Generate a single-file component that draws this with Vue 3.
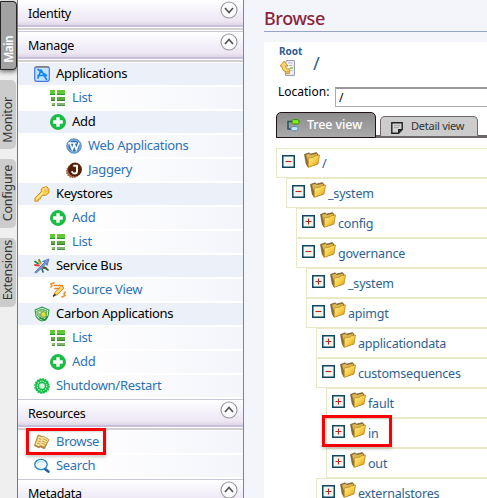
<script setup>
import { h } from 'vue'

const tabs = [
  { label: 'Main', cls: 'main' },
  { label: 'Monitor', cls: 'monitor' },
  { label: 'Configure', cls: 'configure' },
  { label: 'Extensions', cls: 'extensions' }
]

const sections = [
  { title: 'Identity', open: false, items: [] },
  {
    title: 'Manage',
    open: true,
    items: [
      { t: 'Applications', i: 'app', head: true, l: 0 },
      { t: 'List', i: 'list', l: 1 },
      { t: 'Add', i: 'add', head: true, l: 1 },
      { t: 'Web Applications', i: 'web', l: 2 },
      { t: 'Jaggery', i: 'jag', l: 2 },
      { t: 'Keystores', i: 'key', head: true, l: 0 },
      { t: 'Add', i: 'add', l: 1 },
      { t: 'List', i: 'list', l: 1 },
      { t: 'Service Bus', i: 'bus', head: true, l: 0 },
      { t: 'Source View', i: 'source', l: 1 },
      { t: 'Carbon Applications', i: 'carbon', head: true, l: 0 },
      { t: 'List', i: 'list', l: 1 },
      { t: 'Add', i: 'add', l: 1 },
      { t: 'Shutdown/Restart', i: 'gear', l: 0 }
    ]
  },
  {
    title: 'Resources',
    open: true,
    items: [
      { t: 'Browse', i: 'browse', l: 0, mark: true },
      { t: 'Search', i: 'search', l: 0 }
    ]
  },
  { title: 'Metadata', open: true, items: [] }
]

const tree = [
  { t: '/', l: 0, open: true },
  { t: '_system', l: 1, open: true },
  { t: 'config', l: 2 },
  { t: 'governance', l: 2, open: true },
  { t: '_system', l: 3 },
  { t: 'apimgt', l: 3, open: true },
  { t: 'applicationdata', l: 4 },
  { t: 'customsequences', l: 4, open: true },
  { t: 'fault', l: 5 },
  { t: 'in', l: 5, mark: true },
  { t: 'out', l: 5 },
  { t: 'externalstores', l: 4 }
]

const p = (d, fill, stroke, w = 1) =>
  h('path', { d, fill: fill || 'none', stroke: stroke || 'none', 'stroke-width': w, 'stroke-linejoin': 'round', 'stroke-linecap': 'round' })
const c = (cx, cy, r, fill, stroke, w = 1, dash) =>
  h('circle', { cx, cy, r, fill, stroke: stroke || 'none', 'stroke-width': w, 'stroke-dasharray': dash })

const shapes = {
  app: () => [
    p('M3 .7H13Q15.3 .7 15.3 3V13Q15.3 15.3 13 15.3H3Q.7 15.3 .7 13V3Q.7 .7 3 .7Z', '#c5e2fc', '#4478e0', 1.2),
    p('M2 1H14', null, '#8b7f83', 1.4),
    p('M4 12L7 4L12.5 13.5M4 3.5L12.5 9.5M4 9.5L9 9.5', null, '#1687f2', 1.7)
  ],
  list: () => [
    p('M0 0H5V5H0ZM7 0H15V5H7Z', '#62c735'),
    p('M0 4H5V5H0ZM7 4H15V5H7Z', '#259a22'),
    p('M1 7H5V11H1ZM7 7H15V11H7Z', '#5fa93f'),
    p('M1 10H5V11H1ZM7 10H15V11H7Z', '#2c8527'),
    p('M2 13H5V16H2ZM7 13H15V16H7Z', '#86b573'),
    p('M2 15H5V16H2ZM7 15H15V16H7Z', '#4f9540')
  ],
  add: () => [
    c(8, 8, 7.6, '#16bf42', '#06a634', 0.6),
    p('M6.3 3.2H9.7V6.3H12.8V9.7H9.7V12.8H6.3V9.7H3.2V6.3H6.3Z', '#fff')
  ],
  web: () => [
    c(8, 8, 7.3, '#2d6fb4', '#6b9bc8', 1),
    c(8, 8, 6.1, 'none', '#d6eafa', 0.7),
    p('M2.8 5H6M7 5H10M3.8 5L6.3 12L8.2 6L10.3 12L12.8 5.2', null, '#fff', 1.6)
  ],
  jag: () => [
    c(7, 9.2, 6.3, '#a3674a', '#a3674a', 1.5, '1.2 1.2'),
    c(9, 7.6, 7, '#542008'),
    p('M8 3.8H11V9.2Q11 11.5 8.5 11.5Q6.7 11.5 6.2 10', null, '#fff', 1.9)
  ],
  key: () => [
    p('M9 1.7L12.5.6L15.2 3.3L14.7 7.1L11.3 9.6L8.8 9.2L7.2 10.8L6.4 12.9L4.5 13.1L4 15.2L.8 15.2L1 12L7.2 5.8L7.2 3.5Z', '#f9cf4e', '#d18b22', 1),
    p('M2.5 13L8.5 7M9 4L12 2', null, '#fff095', 1.2),
    c(12.2, 3.9, 1.1, '#fff', '#bf8f34', 0.6)
  ],
  bus: () => [
    p('M1 14L11 4L8.5 3.5L15 1L13 7.5L12.3 5.3L3 14.5Z', '#7c9add', '#4469af', 0.8),
    p('M1 3.5L4 5.5M5 2L6.5 5', null, '#248b4a', 1.8),
    p('M1 7L5 7.5M9 10L12 10', null, '#e53a31', 1.8),
    p('M8 11L9 14M10 9L14 12', null, '#20704b', 1.6),
    p('M4.5 3L7 6', null, '#f3a227', 1.4)
  ],
  source: () => [
    p('M4 1L1 1.8L2 4L.8 5M12 15L15 13.5L14 11.5L15.2 10', null, '#f48c25', 1.6),
    p('M4.5 3.5H12.5M5 6.5H10', null, '#e9831b', 1.6),
    p('M12 4L14 6L7 13L3.5 14L4.7 10.8Z', '#fed56d', '#d78828', 1),
    p('M3.5 14L5 12.7', null, '#443327', 1.6)
  ],
  carbon: () => [
    p('M1 4L8 1L15 4L14 10Q12 14 8 15Q4 14 2 10Z', '#e2f5e2', '#2c9b49', 1.1),
    p('M3 5L8 3L13 5L12 10L8 13L4 10Z', '#8fca84', '#5caf5d', 1),
    p('M5 6L8 8L11 6M8 8V12', null, '#fff', 1),
    c(9.5, 8.5, 2.8, '#d7df4e', '#71a52b', 1),
    p('M6 12L11 14L13 11', null, '#218c36', 1.8)
  ],
  gear: () => [
    c(8, 8, 6.9, '#11bd46', '#11bd46', 1.8, '1.8 .9'),
    c(8, 8, 4.8, 'none', '#bef3cb', 1.3, '1.3 1.2'),
    c(8, 8, 2.8, '#d9f7df')
  ],
  browse: () => [
    p('M4.5 1L14.8 5.5L10.5 14.8L6.5 13L4.6 13.8L.8 11.8Z', '#b98337', '#a57531', 0.8),
    p('M1.2 10.5L4.6 1.4L8 3L10 2.4L14.8 5.8L10.3 13L6.8 11.6L4.8 12.4Z', '#f9e39c', '#c79342', 0.8),
    p('M5 4.5L7.2 5.3M4.2 7L6.6 7.8M3.5 9.2L5.7 10M9.5 5L12.6 6.5M8.5 7.2L11.6 8.5M7.8 9.2L10.5 10.4', null, '#c1933c', 0.9)
  ],
  search: () => [
    p('M10.5 10.5L14.3 13.6', null, '#205ba3', 2.6),
    h('ellipse', { cx: 7, cy: 6.5, rx: 6.2, ry: 5.1, fill: '#eef8ff', stroke: '#3286ce', 'stroke-width': 1.4 }),
    p('M3 5.5Q5 2.5 9 4', null, '#c2e1f7', 1.3)
  ]
}
const Glyph = (props) => h('svg', { viewBox: '0 0 16 16', width: 16, height: 16 }, shapes[props.name]())
Glyph.props = ['name']
</script>

<template>
  <div class="page">
    <nav class="rail">
      <div v-for="t in tabs" :key="t.label" class="vtab" :class="t.cls"><span>{{ t.label }}</span></div>
    </nav>
    <aside class="menu">
      <section v-for="s in sections" :key="s.title">
        <header class="sec">
          <span>{{ s.title }}</span>
          <svg class="chev" width="18" height="18" viewBox="0 0 18 18">
            <circle cx="9" cy="9" r="8" fill="#fbfafd" stroke="#999" stroke-width="1.1" />
            <path :d="s.open ? 'M5 11L9 6.5L13 11' : 'M5 7L9 11.5L13 7'" fill="none" stroke="#555" stroke-width="1.7" />
          </svg>
        </header>
        <div v-for="(it, n) in s.items" :key="n" class="item" :class="['l' + it.l, { head: it.head }]">
          <Glyph :name="it.i" /><span>{{ it.t }}</span>
          <i v-if="it.mark" class="mark browse-mark"></i>
        </div>
      </section>
    </aside>
    <main>
      <h1>Browse</h1>
      <div class="panel">
        <div class="crumb">
          <div class="root">
            <b>Root</b>
            <svg width="16" height="16" viewBox="0 0 16 16">
              <path d="M7.5.6H15.4V15.4H6.5V3Z" fill="#f1f3f8" stroke="#9293a9" />
              <path d="M9 3H13.5M10 5.5H13.5M11 8H13.5M12 10.5H13.5" stroke="#b4b9cc" />
              <path d="M11 7H14V9H11Z" fill="#9dcb84" />
              <path d="M1 6L5.2 1.2L9 6H6.7Q6.2 9 10.8 9V11.8Q3 13 2.8 6Z" fill="#f8d66a" stroke="#c38a2b" stroke-width=".9" />
              <path d="M6 12.5Q8 14.2 11 12.8" fill="none" stroke="#d29b37" stroke-width="1.5" />
            </svg>
          </div>
          <span class="slash">/</span>
        </div>
        <div class="loc"><label>Location:</label><div class="field">/</div></div>
        <div class="views">
          <div class="view on">
            <svg width="13" height="13" viewBox="0 0 13 13">
              <path d="M5 2.5H1V10H5" fill="none" stroke="#24535b" stroke-width="1.5" />
              <rect x="5" y=".6" width="7" height="4.4" rx="1.4" fill="#83ed1d" stroke="#398217" />
              <rect x="4" y="7.6" width="7" height="4.2" rx="1.8" fill="#c5e5ff" stroke="#568eb4" />
            </svg>
            <span>Tree view</span>
          </div>
          <div class="view off">
            <svg width="12" height="12" viewBox="0 0 12 12">
              <path d="M.8.8H11.2V7.5L7.5 11.2H.8Z" fill="#d2d2d2" stroke="#222" stroke-width="1.4" />
              <path d="M7 11.5V7H11.5Z" fill="#222" />
              <path d="M3 3.5H9M3 5.5H8" stroke="#a9a9a9" />
            </svg>
            <span>Detail view</span>
          </div>
        </div>
        <div class="tree">
          <div v-for="(n, k) in tree" :key="k" class="node" :class="'d' + n.l">
            <svg class="toggle" width="13" height="13" viewBox="0 0 13 13">
              <rect x=".75" y=".75" width="11.5" height="11.5" fill="#f2f6ed" stroke="#104760" stroke-width="1.5" />
              <path :d="n.open ? 'M3.5 6.5H9.5' : 'M3.5 6.5H9.5M6.5 3.5V9.5'" stroke="#b92722" stroke-width="1.1" />
            </svg>
            <svg class="folder" width="16" height="16" viewBox="0 0 16 16">
              <defs>
                <linearGradient id="gold" x2="1" y2="1">
                  <stop offset="0" stop-color="#fff09b" /><stop offset=".5" stop-color="#f7cf4b" /><stop offset="1" stop-color="#d98c0c" />
                </linearGradient>
              </defs>
              <path d="M.5 2.4L5 .8L6.5 2L12.5.6L14 2.5L13 12L4 15L2.2 12Z" fill="#8b7139" stroke="#635023" stroke-width=".6" />
              <path d="M2 3L5 1.8L7 3L13 1.8V5L4 9Z" fill="#dcb752" />
              <path d="M4.3 6L10 5L11 3.8L15.5 3L14 12L4.2 15.4Z" fill="url(#gold)" stroke="#b5811a" stroke-width=".7" />
            </svg>
            <span>{{ n.t }}</span>
            <i v-if="n.mark" class="mark in-mark"></i>
          </div>
        </div>
      </div>
    </main>
  </div>
</template>

<style>
body { margin: 0; overflow: hidden; }
</style>

<style scoped>
.page { width: 487px; height: 498px; overflow: hidden; display: flex; background: #f4f5fb; font: 13px/20px "Noto Sans", "Open Sans", sans-serif; color: #000; }
svg { display: block; flex: none; }
.rail { width: 17px; flex: none; background: #efefef; border-right: 1px solid #77777b; box-sizing: content-box; }
.vtab { box-sizing: border-box; width: 16px; background: #ccc; border-radius: 0 5px 5px 0; display: flex; align-items: center; justify-content: center; color: #333; font-size: 12.5px; letter-spacing: -.2px; }
.vtab span { writing-mode: vertical-rl; transform: rotate(180deg); line-height: 16px; white-space: nowrap; }
.main { margin-top: 1px; height: 69px; width: 17px; background: #a2a2a2; border: 1px solid #252525; border-radius: 0 4px 4px 0; color: #fff; align-items: flex-end; padding-bottom: 6px; box-shadow: 0 2px 4px #777; font-weight: 600; font-size: 12px; letter-spacing: -.6px; }
.monitor { height: 69px; margin-top: 10px; padding-top: 10px; }
.configure { height: 69px; margin-top: 10px; }
.extensions { height: 69px; margin-top: 10px; padding-bottom: 5px; letter-spacing: -.3px; }
.menu { width: 225px; flex: none; background: #fff; border-right: 1px solid #8c9420; margin-top: -1px; }
.sec { box-sizing: border-box; height: 32px; display: flex; justify-content: space-between; padding: 3px 5px 0 10px; font-size: 12.5px; letter-spacing: -.3px; line-height: 23px;
  background: linear-gradient(to bottom, #c9c8d6 0 1px, #fff 1px, #f1edf8 16px, #ede8f4 22px, #ddd5e4 26px, #c8bfdc 26px 28px, #fff 28px 29px, #d2cfd6 29px 31px, #fff 31px); }
.chev { margin-top: -1px; }
.item { position: relative; box-sizing: border-box; height: 24px; border-bottom: 2px solid #fff; display: flex; align-items: center; color: #2c72b8; background: linear-gradient(to right, #fff 25%, #f4f5fb); background-clip: padding-box; white-space: nowrap; letter-spacing: -.3px; }
.item.head { background: #ecf0f9; background-clip: padding-box; color: #000; }
.item.l0 { padding-left: 16px; }
.item.l1 { padding-left: 32px; }
.item.l2 { padding-left: 48px; }
.item span { margin-left: 6px; line-height: 20px; padding-bottom: 2px; }
.mark { position: absolute; box-sizing: border-box; border: 3px solid #f90006; box-shadow: 0 2px 3px #9998, inset 0 1px 2px #9996; z-index: 2; }
.browse-mark { left: 8px; top: -3px; width: 80px; height: 27px; }
main { flex: 1; min-width: 0; padding-left: 20px; }
h1 { margin: 0; height: 31px; border-bottom: 1px solid #97a5cd; color: #8b2438; font-size: 18px; font-weight: 500; line-height: 37px; letter-spacing: -.4px; }
.panel { margin-top: 10px; background: #fff; height: 456px; padding-left: 12px; }
.crumb { height: 37px; display: flex; color: #2d5d94; }
.root { width: 34px; padding: 1px 0 0 3px; }
.root b { display: block; font-size: 10px; line-height: 17px; font-weight: 700; }
.slash { font-size: 18px; line-height: 42px; }
.loc { display: flex; height: 33px; padding-left: 2px; }
.loc label { width: 57px; line-height: 25px; font-size: 12px; white-space: nowrap; }
.field { box-sizing: border-box; height: 20px; margin-top: 8px; flex: 1; border: 1px solid #aaa; border-right: 0; border-top: 2px solid #999; padding-left: 3px; line-height: 18px; font-size: 12px; }
.views { display: flex; align-items: flex-end; height: 26px; background: linear-gradient(to bottom, transparent 23px, #6a6666 23px 26px, transparent 26px); white-space: nowrap; }
.view { box-sizing: border-box; display: flex; align-items: center; border: 1px solid #766; }
.on { width: 100px; height: 26px; padding-left: 10px; gap: 7px; background: linear-gradient(#8c8c8c, #aaa); border-color: #1d1413; color: #fff; border-radius: 5px 5px 0 0; font-weight: 500; font-size: 12.5px; letter-spacing: -.1px; }
.off { width: 98px; height: 20px; margin: 0 0 2px 4px; padding-left: 10px; padding-top: 2px; gap: 8px; background: #ccc; border-bottom: 0; border-radius: 5px 5px 0 0; color: #333; font-size: 11px; letter-spacing: -.25px; }
.off span { padding-bottom: 3px; }
.tree { margin-top: 10px; }
.node { position: relative; box-sizing: border-box; height: 30px; border: 1px solid #e9e9c8; border-right: 0; display: flex; padding-left: 5px; color: #2e5f94; font-size: 12.5px; letter-spacing: -.2px; }
.toggle { margin-top: 6px; }
.folder { margin: 3px 2px 0 5px; }
.node span { line-height: 29px; }
.d0 .folder { margin-left: 9px; }
.d1 { margin-left: 10px; }
.d2 { margin-left: 20px; }
.d3 { margin-left: 30px; }
.d4 { margin-left: 40px; }
.d5 { margin-left: 50px; }
.in-mark { left: -5px; top: -4px; width: 70px; height: 32px; }
</style>
